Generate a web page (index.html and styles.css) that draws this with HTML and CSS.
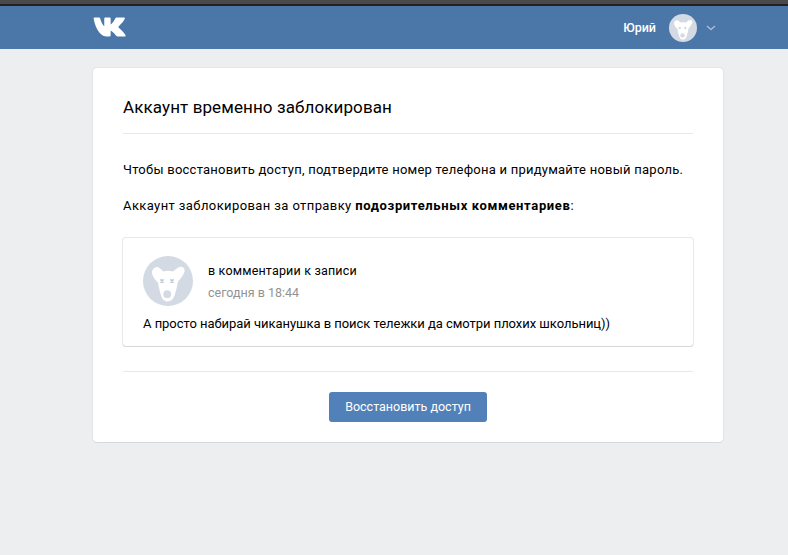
FILE: index.html
```html
<!DOCTYPE html>
<html lang="ru">
<head>
<meta charset="utf-8">
<title>Аккаунт временно заблокирован</title>
<link rel="stylesheet" href="styles.css">
</head>
<body>
<div class="topstrip"></div>
<header class="header">
  <div class="header-inner">
    <svg class="logo" viewBox="0 0 34 20" aria-label="VK"><path d="M0.6 1.2C0.6 0.6 1 0.2 1.7 0.2H6.2C6.9 0.2 7.2 0.5 7.4 1.2C8.6 5 10.3 8.2 11.6 9.2V1.6C11.6 0.7 12 0.2 12.8 0.2H17.2C17.8 0.2 18.2 0.6 18.2 1.2V7.4C19.8 6.6 21.8 3.8 23 1C23.3 0.4 23.7 0.2 24.3 0.2H31.8C32.8 0.2 33 0.8 32.7 1.6C31.8 4 28.6 7.4 26.6 9.2C26 9.8 26 10.2 26.6 10.8C28.6 12.6 31.8 15.4 33.4 18.2C33.9 19.2 33.5 19.8 32.5 19.8H25.6C24.8 19.8 24.4 19.5 23.9 19C22.6 17.6 20.6 15 18.2 13.6V18.6C18.2 19.4 17.8 19.8 17 19.8H14.4C8.4 19.8 3 13.6 0.6 1.2Z"/></svg>
    <div class="user">
      <span class="user-name">Юрий</span>
      <svg class="avatar avatar-small" viewBox="0 0 50 50"><use href="#dog"/></svg>
      <svg class="chevron" viewBox="0 0 10 6"><path d="M1 1L5 4.5L9 1"/></svg>
    </div>
  </div>
</header>
<main class="card">
  <h1 class="title">Аккаунт временно заблокирован</h1>
  <p class="para para-first">Чтобы восстановить доступ, подтвердите номер телефона и придумайте новый пароль.</p>
  <p class="para para-second">Аккаунт заблокирован за отправку <b>подозрительных комментариев</b>:</p>
  <section class="comment">
    <div class="comment-head">
      <svg class="avatar avatar-big" viewBox="0 0 50 50">
        <symbol id="dog" viewBox="0 0 50 50">
          <circle cx="25" cy="25" r="25" fill="#d3dae3"/>
          <path fill="#fff" d="M9 15.5C9.8 12.5 12.5 10.6 15 11.2C17 11.8 18.6 13.6 20.3 15.4C23.5 14.6 26.8 14.6 30 15.6C32.4 13.4 35.2 11 37.8 10.8C40.4 10.8 42 13 41.6 15.2C40.8 19 37.6 22.8 35 25.4C34.2 30 33 35 31.6 39.6C30.4 43.4 27.8 45.6 24.6 45.6C21.6 45.6 19.6 43.8 18.6 41C17 36.4 15.8 31.4 15 26.4C12 24 8.6 19.6 9 15.5Z"/>
          <circle cx="24.2" cy="38.2" r="3.9" fill="#d3dae3"/>
          <path stroke="#c3ccd7" stroke-width="1.7" fill="none" d="M17.3 23.3L20.7 26.7M20.7 23.3L17.3 26.7M27.3 23.3L30.7 26.7M30.7 23.3L27.3 26.7"/>
        </symbol>
        <use href="#dog"/>
      </svg>
      <div class="comment-meta">
        <div class="comment-where">в комментарии к записи</div>
        <div class="comment-date">сегодня в 18:44</div>
      </div>
    </div>
    <p class="comment-text">А просто набирай чиканушка в поиск тележки да смотри плохих школьниц))</p>
  </section>
  <div class="actions">
    <button class="btn" type="button">Восстановить доступ</button>
  </div>
</main>
</body>
</html>
```

FILE: styles.css
```css
* { box-sizing: border-box; }
html, body { margin: 0; height: 100%; }
body {
  background: #edeef0;
  font-family: Roboto, "Liberation Sans", sans-serif;
  font-size: 13px;
  color: #000;
  overflow: hidden;
}
.topstrip {
  height: 6px;
  background: linear-gradient(#4a4a4a 0, #4a4a4a 4px, #222 4px, #222 6px);
}
.header { height: 43px; background: #4a76a8; }
.header-inner {
  width: 630px;
  margin-left: 93px;
  height: 100%;
  display: flex;
  align-items: center;
  justify-content: space-between;
}
.logo { width: 33px; height: 20px; fill: #fff; margin-top: -1px; }
.user { display: flex; align-items: center; padding-right: 7px; }
.user-name { color: #fff; font-size: 12.5px; font-weight: 500; }
.avatar { display: block; }
.avatar-small { width: 28px; height: 28px; margin-left: 13px; }
.chevron { width: 10px; height: 6px; margin-left: 9px; fill: none; stroke: #a5bcd6; stroke-width: 1.5; }
.card {
  width: 630px;
  height: 374px;
  margin: 19px 0 0 93px;
  padding: 0 30px;
  background: #fff;
  border-radius: 4px;
  box-shadow: 0 1px 0 0 #d7d8db, 0 0 0 1px #e3e4e8;
  display: flex;
  flex-direction: column;
}
.title {
  margin: 0;
  height: 66px;
  padding-top: 28px;
  font-size: 17px;
  line-height: 22px;
  font-weight: 400;
  letter-spacing: 0.1px;
  border-bottom: 1px solid #e7e8ec;
}
.para { margin: 0; font-size: 13px; line-height: 18px; letter-spacing: 0.24px; }
.para-first { margin-top: 27px; }
.para-second { margin-top: 18px; letter-spacing: 0.4px; }
.para b { font-weight: 700; letter-spacing: 0.64px; }
.comment {
  margin-top: 23px;
  height: 108px;
  border-radius: 3px;
  box-shadow: 0 1px 0 0 #d7d8db, 0 0 0 1px #e7e8ec;
  padding: 18px 20px 0;
}
.comment-head { display: flex; align-items: center; gap: 15px; }
.avatar-big { width: 50px; height: 50px; }
.comment-meta { display: flex; flex-direction: column; gap: 7px; padding-top: 1px; }
.comment-where { font-size: 12.5px; line-height: 15px; letter-spacing: 0.18px; }
.comment-date { font-size: 12.5px; line-height: 15px; color: #939393; }
.comment-text { margin: 9px 0 0; font-size: 13px; line-height: 18px; letter-spacing: -0.04px; }
.actions {
  margin-top: 25px;
  border-top: 1px solid #e7e8ec;
  display: flex;
  justify-content: center;
  padding-top: 20px;
}
.btn {
  width: 158px;
  height: 30px;
  border: 0;
  border-radius: 3px;
  background: #5181b8;
  color: #fff;
  font-family: inherit;
  font-size: 12.5px;
  padding: 0 0 2px;
}
```
